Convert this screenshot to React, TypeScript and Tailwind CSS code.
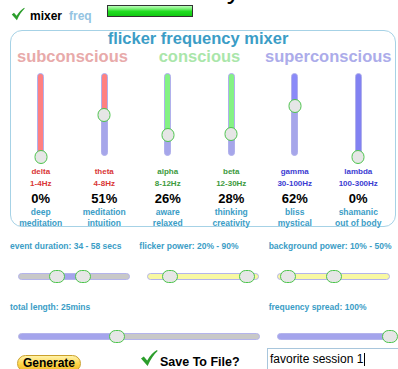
import React from "react";

const Check = ({ className }: { className: string }) => (
	<svg viewBox="0 0 18 18" className={className}>
		<path d="M1 9.5 L3.8 7.4 L7.2 11.4 C10 6.5 13.5 3 17 1 L17.6 1.9 C14 5.2 10.6 10.2 7.6 17 Z" fill="#2c9e2c" />
	</svg>
);

type Band = {
	name: string;
	hz: string;
	value: number;
	d1: string;
	d2: string;
	text: string;
	fill: string;
};

const bands: Band[] = [
	{ name: "delta", hz: "1-4Hz", value: 0, d1: "deep", d2: "meditation", text: "text-[#d93636]", fill: "bg-[#ff8080]" },
	{ name: "theta", hz: "4-8Hz", value: 51, d1: "meditation", d2: "intuition", text: "text-[#d93636]", fill: "bg-[#ff8080]" },
	{ name: "alpha", hz: "8-12Hz", value: 26, d1: "aware", d2: "relaxed", text: "text-[#3c9a3c]", fill: "bg-[#84f284]" },
	{ name: "beta", hz: "12-30Hz", value: 28, d1: "thinking", d2: "creativity", text: "text-[#3c9a3c]", fill: "bg-[#84f284]" },
	{ name: "gamma", hz: "30-100Hz", value: 62, d1: "bliss", d2: "mystical", text: "text-[#3c3cd2]", fill: "bg-[#8a8af8]" },
	{ name: "lambda", hz: "100-300Hz", value: 0, d1: "shamanic", d2: "out of body", text: "text-[#3c3cd2]", fill: "bg-[#8282f2]" },
];

const TRACK = 83;

const VSlider = ({ value, fill }: { value: number; fill: string }) => {
	const top = (1 - value / 100) * TRACK;
	return (
		<div className="relative w-[7px] h-[83px] rounded-full border border-[#b0b0ec] bg-[#a6a6ea]">
			<div className={`absolute left-0 right-0 top-0 rounded-full ${fill}`} style={{ height: top }} />
			<div
				className="absolute left-1/2 -translate-x-1/2 w-[13px] h-[14px] rounded-full bg-[#e6e6e6] border-[1.5px] border-[#4cc44c]"
				style={{ top: top - 7 }}
			/>
		</div>
	);
};

const HSlider = ({
	w,
	base,
	range,
	rangeColor,
	thumbs,
}: {
	w: number;
	base: string;
	range?: [number, number];
	rangeColor?: string;
	thumbs: number[];
}) => (
	<div className="relative h-[14px] flex items-center" style={{ width: w }}>
		<div className={`relative w-full h-[7px] rounded-full border border-[#b4b4ec] ${base}`}>
			{range && (
				<div
					className={`absolute top-0 bottom-0 rounded-full ${rangeColor}`}
					style={{ left: range[0], width: range[1] - range[0] }}
				/>
			)}
		</div>
		{thumbs.map((t) => (
			<div
				key={t}
				className="absolute top-[0.5px] w-[16px] h-[13px] rounded-full bg-[#e6e6e6] border-[1.5px] border-[#4cc44c]"
				style={{ left: t - 8 }}
			/>
		))}
	</div>
);

const App = () => {
	return (
		<div className="w-[398px] h-[369px] overflow-hidden bg-white font-['Liberation_Sans',Arial,sans-serif] text-black">
			{/* top bar */}
			<div className="flex h-[30px] pl-[10px]">
				<Check className="w-[16px] h-[14px] mt-[7px]" />
				<span className="ml-[4px] mt-[9px] text-[12px] leading-[14px] font-bold">mixer</span>
				<span className="ml-[7px] mt-[9px] text-[12px] leading-[14px] font-bold text-[#94c4e2]">freq</span>
				<div className="ml-[15px] mt-[5px] w-[86px] h-[12px] border border-[#333] bg-gradient-to-b from-[#b8ffb8] via-[#22e022] to-[#12c812]" />
				<span className="ml-[34px] -mt-[25px] text-[28px] leading-[28px] h-[30px]">y</span>
			</div>

			{/* mixer panel */}
			<div className="ml-[10px] w-[386px] h-[197px] border border-[#a6d2e6] rounded-[12px]">
				<div className="-mt-[2px] pr-[10px] text-center text-[16.5px] leading-[18px] font-bold text-[#3b9dc6]">
					flicker frequency mixer
				</div>
				<div className="-ml-[2px] w-[381px] grid grid-cols-3 -mt-[1px] text-[16.5px] leading-[20px] font-bold whitespace-nowrap">
					<div className="text-center text-[#e8aaaa]">subconscious</div>
					<div className="text-center text-[#aae6aa]">conscious</div>
					<div className="text-center pl-[2px] text-[#acacea]">superconscious</div>
				</div>
				<div className="-ml-[2px] w-[381px] grid grid-cols-6 mt-[7px]">
					{bands.map((b) => (
						<div key={b.name} className="flex flex-col items-center">
							<div className="h-[93px]">
								<VSlider value={b.value} fill={b.fill} />
							</div>
							<div className={`text-[8px] leading-[12px] font-bold ${b.text}`}>{b.name}</div>
							<div className={`text-[8px] leading-[12px] font-bold ${b.text}`}>{b.hz}</div>
							<div className="text-[13px] leading-[17px] font-bold">{b.value}%</div>
							<div className="text-[8.5px] leading-[11px] font-bold text-[#3b9dc6] text-center whitespace-nowrap">{b.d1}</div>
							<div className="text-[8.5px] leading-[11px] font-bold text-[#3b9dc6] text-center whitespace-nowrap">{b.d2}</div>
						</div>
					))}
				</div>
			</div>

			{/* settings */}
			<div className="ml-[10px] w-[388px] mt-[13px] grid grid-cols-3 text-[8.5px] leading-[12px] font-bold text-[#3b9dc6] whitespace-nowrap">
				<div>event duration: 34 - 58 secs</div>
				<div>flicker power: 20% - 90%</div>
				<div>background power: 10% - 50%</div>

				<div className="pl-[8px] mt-[17px]">
					<HSlider w={112} base="bg-[#c8c8c8]" range={[39, 65]} rangeColor="bg-[#a4a4ec]" thumbs={[39, 65]} />
				</div>
				<div className="pl-[8px] mt-[17px]">
					<HSlider w={112} base="bg-[#f8f8a2]" thumbs={[23, 100]} />
				</div>
				<div className="pl-[8px] mt-[17px]">
					<HSlider w={113} base="bg-[#f8f8a2]" thumbs={[11, 57]} />
				</div>

				<div className="col-span-2 mt-[18px]">total length: 25mins</div>
				<div className="mt-[18px]">frequency spread: 100%</div>

				<div className="col-span-2 pl-[8px] mt-[16px]">
					<HSlider w={242} base="bg-[#c8c8c8]" range={[0, 99]} rangeColor="bg-[#a4a4ec]" thumbs={[99]} />
				</div>
				<div className="pl-[8px] mt-[16px]">
					<HSlider w={113} base="bg-[#a4a4ec]" thumbs={[113]} />
				</div>
			</div>

			{/* actions */}
			<div className="flex items-start mt-[5px] pl-[17px]">
				<button className="shrink-0 mt-[7px] w-[64px] h-[17px] rounded-full border border-[#caa02a] bg-gradient-to-b from-[#fff2a8] via-[#ffd84a] to-[#f0b820] text-[12px] leading-[15px] font-bold text-black">
					Generate
				</button>
				<Check className="shrink-0 ml-[59px] mt-[1px] w-[18px] h-[18px]" />
				<span className="shrink-0 w-[109px] pl-[2px] mt-[7px] text-[12.5px] leading-[15px] font-bold whitespace-nowrap">
					Save To File?
				</span>
				<div className="shrink-0 w-[140px] h-[24px] border border-[#a8c6dc] pl-[2px] pt-[3px] text-[12px] leading-[15px] flex items-start whitespace-nowrap">
					favorite session 1<span className="ml-[1px] mt-[1px] w-px h-[13px] bg-black" />
				</div>
			</div>
		</div>
	);
};

export default App;
